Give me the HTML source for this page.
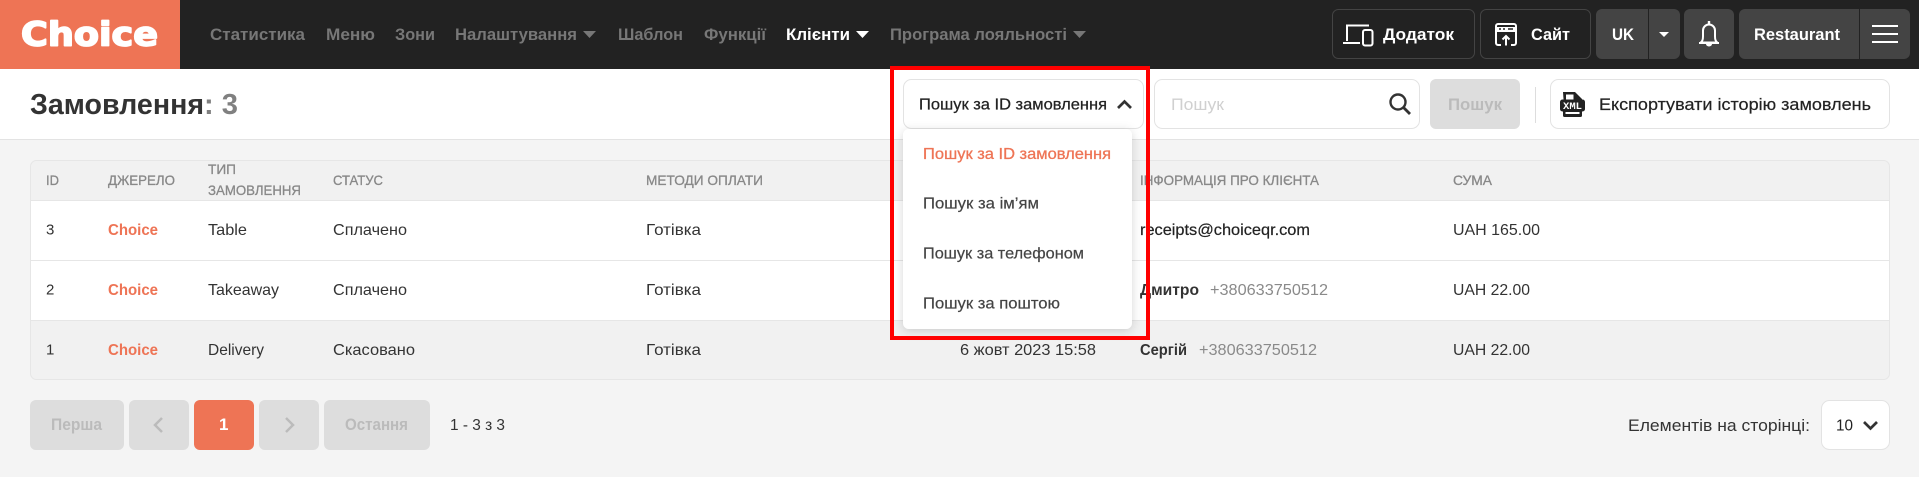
<!DOCTYPE html>
<html lang="uk"><head><meta charset="utf-8"><title>Замовлення</title>
<style>
html,body{margin:0;padding:0;background:#f4f4f4;width:1919px;height:477px;overflow:hidden}
svg{display:block}
text{font-family:"Liberation Sans",Arial,sans-serif;font-size:16px;fill:#333}
.nav{font-size:17px;font-weight:700;fill:#777}
.hb{font-size:17px;font-weight:700;fill:#fff}
.th{font-size:14px;fill:#888;stroke:#888;stroke-width:.3}
.b{stroke:#e3e3e3;fill:#fff}
.or{fill:#ee7455}
.m{fill:#444;stroke:#444;stroke-width:.2}
.g{fill:#8a8a8a}
.pg{font-size:17px;font-weight:700;fill:#bbb}
</style></head><body>
<svg width="1919" height="477" viewBox="0 0 1919 477" xmlns="http://www.w3.org/2000/svg">
<rect width="1919" height="477" fill="#f4f4f4"/>
<!-- header -->
<rect width="1919" height="69" fill="#222"/>
<rect width="180" height="69" fill="#ee7455"/>
<text x="21" y="45.500" textLength="137" lengthAdjust="spacingAndGlyphs" style="font-family:'DejaVu Sans',sans-serif;font-weight:700;font-size:33px;fill:#fff;stroke:#fff;stroke-width:1.700;stroke-linejoin:round">Choice</text>
<text class="nav" x="210" y="40" textLength="95" lengthAdjust="spacingAndGlyphs">Статистика</text>
<text class="nav" x="326" y="40" textLength="49" lengthAdjust="spacingAndGlyphs">Меню</text>
<text class="nav" x="395" y="40" textLength="40" lengthAdjust="spacingAndGlyphs">Зони</text>
<text class="nav" x="455" y="40" textLength="122" lengthAdjust="spacingAndGlyphs">Налаштування</text>
<path d="M583 31h13l-6.500 7z" fill="#777"/>
<text class="nav" x="618" y="40" textLength="65" lengthAdjust="spacingAndGlyphs">Шаблон</text>
<text class="nav" x="704" y="40" textLength="62" lengthAdjust="spacingAndGlyphs">Функції</text>
<text class="nav" x="786" y="40" textLength="64" lengthAdjust="spacingAndGlyphs" style="fill:#fff">Клієнти</text>
<path d="M856 31h13l-6.500 7z" fill="#fff"/>
<text class="nav" x="890" y="40" textLength="177" lengthAdjust="spacingAndGlyphs">Програма лояльності</text>
<path d="M1073 31h13l-6.500 7z" fill="#777"/>
<!-- header right -->
<rect x="1332.500" y="9.500" width="142" height="49" rx="6" fill="#222" stroke="#444"/>
<path d="M1347 41V25.500h22M1343 43h17" fill="none" stroke="#fff" stroke-width="2"/>
<rect x="1363" y="30" width="9.500" height="15.500" rx="2" fill="#222" stroke="#fff" stroke-width="2"/>
<text class="hb" x="1383" y="40" textLength="71" lengthAdjust="spacingAndGlyphs">Додаток</text>
<rect x="1480.500" y="9.500" width="110" height="49" rx="6" fill="#222" stroke="#444"/>
<path d="M1501 45h-3a2 2 0 0 1-2-2V26a2 2 0 0 1 2-2h16a2 2 0 0 1 2 2v17a2 2 0 0 1-2 2h-3" fill="none" stroke="#fff" stroke-width="2"/>
<rect x="1497" y="27" width="18" height="5" fill="#fff"/>
<path d="M1499 29h2M1503 29h2M1508 29h5" stroke="#222" stroke-width="1.500"/>
<path d="M1506 45.500v-9M1502.500 39.500l3.500-3.500 3.500 3.500" fill="none" stroke="#fff" stroke-width="2"/>
<text class="hb" x="1531" y="40" textLength="39" lengthAdjust="spacingAndGlyphs">Сайт</text>
<rect x="1596" y="9" width="84" height="50" rx="6" fill="#444"/>
<rect x="1648" y="9" width="1" height="50" fill="#222"/>
<text class="hb" x="1612" y="40" textLength="22" lengthAdjust="spacingAndGlyphs">UK</text>
<path d="M1659 32h10l-5 5z" fill="#fff"/>
<rect x="1684" y="9" width="50" height="50" rx="6" fill="#444"/>
<path d="M1709 21v3" stroke="#fff" stroke-width="2.400"/>
<path d="M1700.500 42.500c1.800-.8 2.500-3 2.500-6v-6a6 6 0 0 1 12 0v6c0 3 .7 5.200 2.500 6z" fill="none" stroke="#fff" stroke-width="2"/>
<path d="M1699 42h20v2h-20zM1706 44h6a3 2.500 0 0 1-6 0z" fill="#fff"/>
<rect x="1739" y="9" width="171" height="50" rx="6" fill="#444"/>
<rect x="1859" y="9" width="1" height="50" fill="#222"/>
<text class="hb" x="1754" y="40" textLength="86" lengthAdjust="spacingAndGlyphs">Restaurant</text>
<path d="M1872 26h26M1872 34h26M1872 42h26" stroke="#fff" stroke-width="2"/>
<!-- subheader -->
<rect y="69" width="1919" height="70" fill="#fff"/>
<rect y="139" width="1919" height="1" fill="#e3e3e3"/>
<text x="30" y="114" textLength="174" lengthAdjust="spacingAndGlyphs" style="font-size:29px;font-weight:700;fill:#333">Замовлення</text>
<text x="204" y="114" textLength="34" lengthAdjust="spacingAndGlyphs" style="font-size:29px;font-weight:700;fill:#808080">: 3</text>
<!-- export / search -->
<rect class="b" x="903.500" y="79.500" width="240" height="49" rx="8"/>
<text x="919" y="109.500" textLength="188" lengthAdjust="spacingAndGlyphs" style="fill:#222;stroke:#222;stroke-width:.25">Пошук за ID замовлення</text>
<path d="M1118 108l6.500-6.500 6.500 6.500" fill="none" stroke="#333" stroke-width="2.700"/>
<rect class="b" x="1154.500" y="79.500" width="265" height="49" rx="8"/>
<text x="1171" y="110" textLength="53" lengthAdjust="spacingAndGlyphs" style="fill:#d0d0d0;font-size:17px">Пошук</text>
<circle cx="1398" cy="102" r="7.500" fill="none" stroke="#333" stroke-width="2.400"/>
<path d="M1403.500 107.500l6.500 6.500" stroke="#333" stroke-width="2.800"/>
<rect x="1430" y="79" width="90" height="50" rx="6" fill="#ddd"/>
<text class="pg" x="1448" y="110" textLength="54" lengthAdjust="spacingAndGlyphs">Пошук</text>
<rect x="1535" y="87" width="1" height="36" fill="#ddd"/>
<rect class="b" x="1550.500" y="79.500" width="339" height="49" rx="8"/>
<path d="M1563 92h12l7 7v7h-18z" fill="#222"/>
<path d="M1566 94.500h7.500v6h6v1h-13.500z" fill="#fff"/>
<rect x="1560" y="99.500" width="25" height="12" rx="2.500" fill="#222"/>
<rect x="1563" y="110" width="19" height="7" rx="1.500" fill="#222"/>
<rect x="1565.500" y="112" width="14" height="2" fill="#fff"/>
<text x="1563" y="109" textLength="19" lengthAdjust="spacingAndGlyphs" style="font-family:'Liberation Mono',monospace;font-size:10px;font-weight:700;fill:#fff">XML</text>
<text x="1599" y="110" textLength="272" lengthAdjust="spacingAndGlyphs" style="font-size:17px;fill:#222;stroke:#222;stroke-width:.2">Експортувати історію замовлень</text>
<!-- table -->
<rect x="30.500" y="160.500" width="1859" height="219" rx="6" fill="#f1f1f1" stroke="#e6e6e6"/>
<rect x="31" y="201" width="1858" height="119" fill="#fff"/>
<rect x="31" y="200" width="1858" height="1" fill="#e6e6e6"/>
<rect x="31" y="260" width="1858" height="1" fill="#e6e6e6"/>
<rect x="31" y="320" width="1858" height="1" fill="#e6e6e6"/>
<text class="th" x="46" y="185" textLength="13" lengthAdjust="spacingAndGlyphs">ID</text>
<text class="th" x="108" y="185" textLength="67" lengthAdjust="spacingAndGlyphs">ДЖЕРЕЛО</text>
<text class="th" x="208" y="174" textLength="28" lengthAdjust="spacingAndGlyphs">ТИП</text>
<text class="th" x="208" y="195" textLength="93" lengthAdjust="spacingAndGlyphs">ЗАМОВЛЕННЯ</text>
<text class="th" x="333" y="185" textLength="50" lengthAdjust="spacingAndGlyphs">СТАТУС</text>
<text class="th" x="646" y="185" textLength="117" lengthAdjust="spacingAndGlyphs">МЕТОДИ ОПЛАТИ</text>
<text class="th" x="1140" y="185" textLength="179" lengthAdjust="spacingAndGlyphs">ІНФОРМАЦІЯ ПРО КЛІЄНТА</text>
<text class="th" x="1453" y="185" textLength="39" lengthAdjust="spacingAndGlyphs">СУМА</text>
<!-- row 1 -->
<text x="46" y="234.500" style="font-size:15px">3</text>
<text class="or" x="108" y="235" textLength="50" lengthAdjust="spacingAndGlyphs" style="font-weight:700">Choice</text>
<text x="208" y="235" textLength="39" lengthAdjust="spacingAndGlyphs">Table</text>
<text x="333" y="235" textLength="74" lengthAdjust="spacingAndGlyphs">Сплачено</text>
<text x="646" y="235" textLength="55" lengthAdjust="spacingAndGlyphs">Готівка</text>
<text x="1140" y="235" textLength="170" lengthAdjust="spacingAndGlyphs" style="fill:#222;stroke:#222;stroke-width:.2">receipts@choiceqr.com</text>
<text x="1453" y="235" textLength="87" lengthAdjust="spacingAndGlyphs">UAH 165.00</text>
<!-- row 2 -->
<text x="46" y="294.500" style="font-size:15px">2</text>
<text class="or" x="108" y="295" textLength="50" lengthAdjust="spacingAndGlyphs" style="font-weight:700">Choice</text>
<text x="208" y="295" textLength="71" lengthAdjust="spacingAndGlyphs">Takeaway</text>
<text x="333" y="295" textLength="74" lengthAdjust="spacingAndGlyphs">Сплачено</text>
<text x="646" y="295" textLength="55" lengthAdjust="spacingAndGlyphs">Готівка</text>
<text x="1140" y="295" textLength="59" lengthAdjust="spacingAndGlyphs" style="font-weight:700;fill:#333">Дмитро</text>
<text class="g" x="1210" y="295" textLength="118" lengthAdjust="spacingAndGlyphs">+380633750512</text>
<text x="1453" y="295" textLength="77" lengthAdjust="spacingAndGlyphs">UAH 22.00</text>
<!-- row 3 -->
<text x="46" y="354.500" style="font-size:15px">1</text>
<text class="or" x="108" y="355" textLength="50" lengthAdjust="spacingAndGlyphs" style="font-weight:700">Choice</text>
<text x="208" y="355" textLength="56" lengthAdjust="spacingAndGlyphs">Delivery</text>
<text x="333" y="355" textLength="82" lengthAdjust="spacingAndGlyphs">Скасовано</text>
<text x="646" y="355" textLength="55" lengthAdjust="spacingAndGlyphs">Готівка</text>
<text x="960" y="355" textLength="136" lengthAdjust="spacingAndGlyphs">6 жовт 2023 15:58</text>
<text x="1140" y="355" textLength="47" lengthAdjust="spacingAndGlyphs" style="font-weight:700;fill:#333">Сергій</text>
<text class="g" x="1199" y="355" textLength="118" lengthAdjust="spacingAndGlyphs">+380633750512</text>
<text x="1453" y="355" textLength="77" lengthAdjust="spacingAndGlyphs">UAH 22.00</text>
<!-- pagination -->
<rect x="30" y="400" width="94" height="50" rx="6" fill="#ddd"/>
<text class="pg" x="51" y="430" textLength="51" lengthAdjust="spacingAndGlyphs">Перша</text>
<rect x="129" y="400" width="60" height="50" rx="6" fill="#ddd"/>
<path d="M162 418l-7 7 7 7" fill="none" stroke="#bbb" stroke-width="2.500"/>
<rect x="194" y="400" width="60" height="50" rx="6" fill="#ee7455"/>
<text class="pg" x="219" y="430" style="fill:#fff">1</text>
<rect x="259" y="400" width="60" height="50" rx="6" fill="#ddd"/>
<path d="M286 418l7 7-7 7" fill="none" stroke="#bbb" stroke-width="2.500"/>
<rect x="324" y="400" width="106" height="50" rx="6" fill="#ddd"/>
<text class="pg" x="345" y="430" textLength="63" lengthAdjust="spacingAndGlyphs">Остання</text>
<text x="450" y="430" textLength="55" lengthAdjust="spacingAndGlyphs">1 - 3 з 3</text>
<text x="1628" y="431" textLength="182" lengthAdjust="spacingAndGlyphs" style="font-size:17px">Елементів на сторінці:</text>
<rect class="b" x="1821.500" y="400.500" width="68" height="49" rx="8"/>
<text x="1836" y="430.500" textLength="17" lengthAdjust="spacingAndGlyphs" style="fill:#222">10</text>
<path d="M1864 422l6.500 6.500 6.500-6.500" fill="none" stroke="#333" stroke-width="2.700"/>
<!-- dropdown -->
<defs><filter id="s" x="-15%" y="-15%" width="130%" height="130%"><feDropShadow dx="0" dy="2" stdDeviation="5" flood-color="#000" flood-opacity=".16"/></filter></defs>
<rect x="903" y="129" width="229" height="200" rx="6" fill="#fff" filter="url(#s)"/>
<text x="923" y="159" textLength="188" lengthAdjust="spacingAndGlyphs" style="fill:#ee7455;stroke:#ee7455;stroke-width:.3">Пошук за ID замовлення</text>
<text class="m" x="923" y="208.500" textLength="116" lengthAdjust="spacingAndGlyphs">Пошук за ім’ям</text>
<text class="m" x="923" y="258.500" textLength="161" lengthAdjust="spacingAndGlyphs">Пошук за телефоном</text>
<text class="m" x="923" y="308.500" textLength="137" lengthAdjust="spacingAndGlyphs">Пошук за поштою</text>
<!-- annotation -->
<rect x="892" y="68" width="256" height="270" fill="none" stroke="#f00" stroke-width="4"/>
</svg>
</body></html>
